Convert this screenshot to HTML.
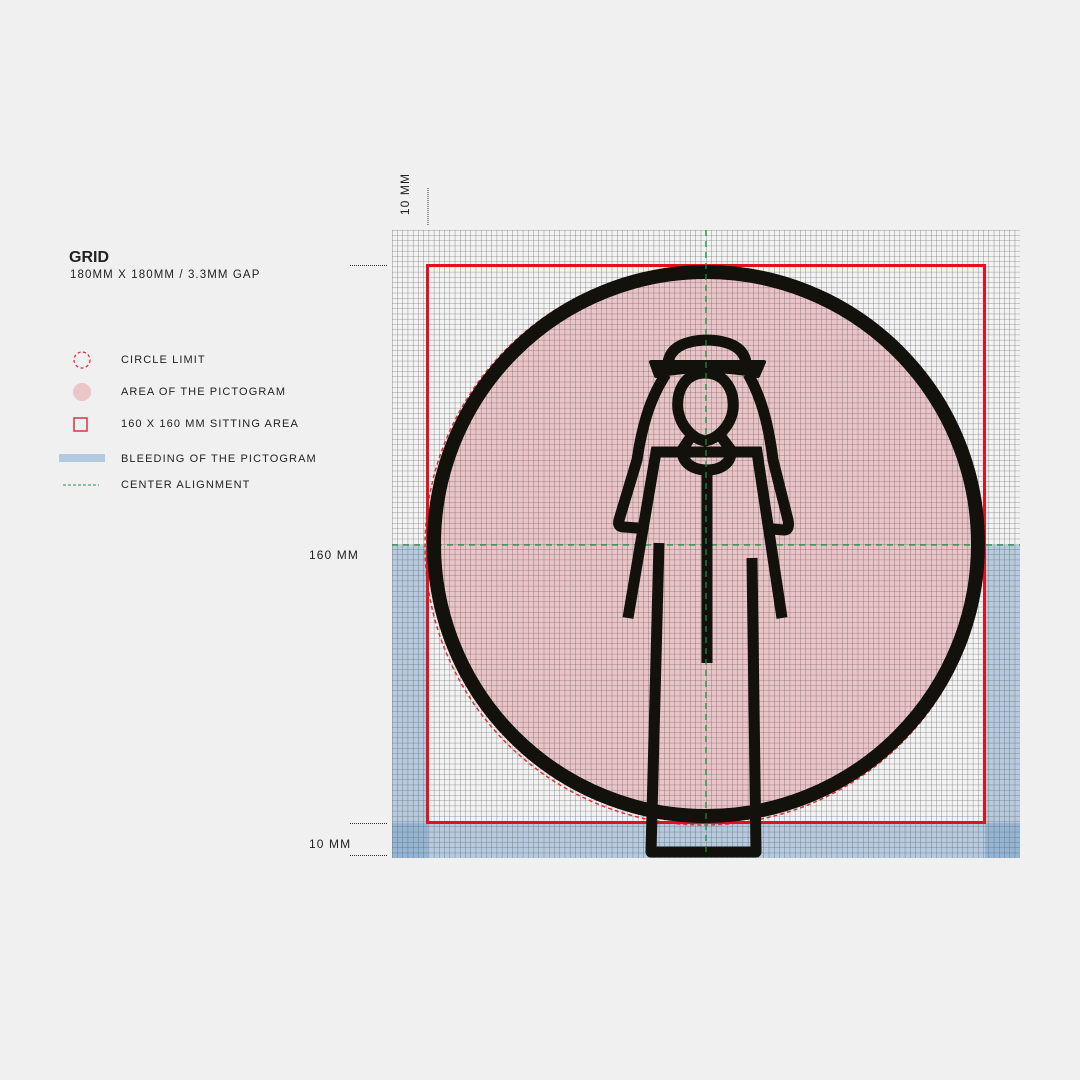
<!DOCTYPE html>
<html><head><meta charset="utf-8"><style>
body{margin:0;background:#f0f0f0;width:1080px;height:1080px;overflow:hidden;position:relative;font-family:"Liberation Sans",sans-serif;color:#222}
.t{position:absolute;font-size:11px;letter-spacing:1.1px;white-space:nowrap}
</style></head><body>
<svg width="1080" height="1080" style="position:absolute;left:0;top:0">
<defs>
<pattern id="g" x="392" y="230" width="5.233" height="5.233" patternUnits="userSpaceOnUse">
<path d="M0 0H5.233M0 0V5.233" stroke="#5a5a5a" stroke-width="0.8" fill="none" opacity="0.8"/>
</pattern>
</defs>
<rect x="392" y="230" width="628" height="628" fill="#f3f3f3"/>
<circle cx="706" cy="544" r="279" fill="#ebc4c7"/>
<rect x="392" y="545" width="36" height="313" fill="#6d9cc8" opacity="0.45"/>
<rect x="985" y="545" width="35" height="313" fill="#6d9cc8" opacity="0.45"/>
<rect x="392" y="823" width="628" height="35" fill="#6d9cc8" opacity="0.45"/>
<rect x="392" y="230" width="628" height="628" fill="url(#g)"/>
<circle cx="704" cy="546" r="279" fill="none" stroke="#e0303a" stroke-width="1.5" stroke-dasharray="4 3"/>
<rect x="427.5" y="265.5" width="557" height="557" fill="none" stroke="#e3101e" stroke-width="3"/>
<line x1="706" y1="230" x2="706" y2="858" stroke="#1a9a4a" stroke-width="1.3" stroke-dasharray="6 5"/>
<line x1="392" y1="545" x2="1020" y2="545" stroke="#1a9a4a" stroke-width="1.3" stroke-dasharray="6 5"/>
<circle cx="706" cy="544" r="272" fill="none" stroke="#12110c" stroke-width="14"/>
<g fill="none" stroke="#12110c" stroke-width="11" stroke-linejoin="round">
<path d="M668 362 Q672 341 707 340 Q742 341 746 362"/>
<path d="M651 362 L764 362 L758 376 Q707 366 656 376 Z" fill="#12110c" stroke-width="4"/>
<path d="M705 373 C684 373 676 392 678 410 C681 428 694 439 705 441 C716 439 730 428 733 410 C735 392 726 373 705 373Z"/>
<path d="M690 438 L682 450 C682 463 693 470 707 470 C721 470 732 463 731 450 L722 438 M683 452 L731 452"/>
<path d="M666 374 C652 395 643 420 637 460 L619 520 Q617 527 624 527 L638 528"/>
<path d="M748 374 C760 395 768 420 773 460 L788 520 Q790 530 784 530 L772 529"/>
<path d="M684 452 L656 452 L628 618" stroke-linejoin="miter"/>
<path d="M730 452 L757 452 L782 618" stroke-linejoin="miter"/>
<path d="M707 468 L707 663" stroke-linejoin="miter"/>
<path d="M659 543 L651 852 L756 852 L752 558"/>
</g>
<line x1="706" y1="230" x2="706" y2="858" stroke="#1a9a4a" stroke-width="1.3" stroke-dasharray="6 5" opacity="0.9"/>
<g stroke="#333" stroke-width="1" stroke-dasharray="1 1">
<line x1="428" y1="188" x2="428" y2="225"/>
<line x1="350" y1="265.5" x2="387" y2="265.5"/>
<line x1="350" y1="823.5" x2="387" y2="823.5"/>
<line x1="350" y1="855.5" x2="387" y2="855.5"/>
</g>
<circle cx="82" cy="360" r="8" fill="none" stroke="#e03040" stroke-width="1.3" stroke-dasharray="3 2.5"/>
<circle cx="82" cy="392" r="9" fill="#ecc5c8"/>
<rect x="74" y="418" width="13" height="13" fill="none" stroke="#e03040" stroke-width="1.5"/>
<rect x="59" y="454" width="46" height="8" fill="#b3cbe0"/>
<line x1="63" y1="485" x2="99" y2="485" stroke="#1a9a4a" stroke-width="1" stroke-dasharray="3 2"/>
</svg>
<div class="t" style="left:69px;top:249px;font-size:16px;font-weight:bold;letter-spacing:0">GRID</div>
<div class="t" style="left:70px;top:269px;font-size:11.5px">180MM X 180MM / 3.3MM GAP</div>
<div class="t" style="left:121px;top:354px">CIRCLE LIMIT</div>
<div class="t" style="left:121px;top:386px">AREA OF THE PICTOGRAM</div>
<div class="t" style="left:121px;top:418px">160 X 160 MM SITTING AREA</div>
<div class="t" style="left:121px;top:453px">BLEEDING OF THE PICTOGRAM</div>
<div class="t" style="left:121px;top:479px">CENTER ALIGNMENT</div>
<div class="t" style="left:309px;top:548px;font-size:12px">160 MM</div>
<div class="t" style="left:309px;top:837px;font-size:12px">10 MM</div>
<div class="t" style="left:384px;top:187px;font-size:12px;transform:rotate(-90deg);transform-origin:center">10 MM</div>
</body></html>
